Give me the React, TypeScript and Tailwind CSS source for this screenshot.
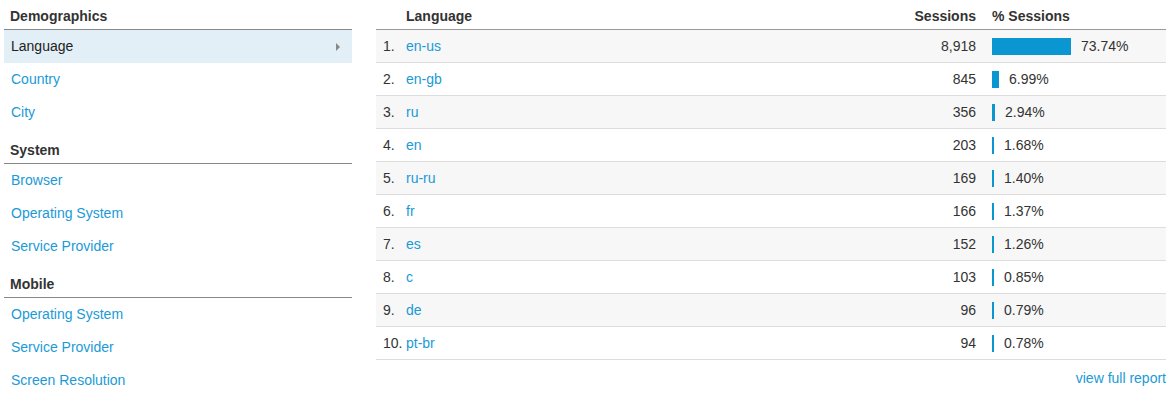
const rows: [string, string, number][] = [
  ["en-us", "8,918", 73.74],
  ["en-gb", "845", 6.99],
  ["ru", "356", 2.94],
  ["en", "203", 1.68],
  ["ru-ru", "169", 1.4],
  ["fr", "166", 1.37],
  ["es", "152", 1.26],
  ["c", "103", 0.85],
  ["de", "96", 0.79],
  ["pt-br", "94", 0.78],
];

function Section({ title, items, active }: { title: string; items: string[]; active?: string }) {
  return (
    <div>
      <div className="h-[30px] flex items-end pb-[2px] pl-[6px] font-bold text-[#333] border-b border-[#888]">{title}</div>
      {items.map((it) => (
        <div
          key={it}
          className={
            "h-[33px] flex items-center pl-[7px] pr-[12px] " +
            (it === active ? "bg-[#e2eff6] text-[#222]" : "text-[#1a9ad6]")
          }
        >
          <span className="flex-1">{it}</span>
          {it === active && <span className="w-0 h-0 border-y-[4px] border-y-transparent border-l-[4px] border-l-[#888]" />}
        </div>
      ))}
      <div className="h-[5px]" />
    </div>
  );
}

export default function App() {
  return (
    <div className="w-[1174px] h-[403px] bg-white flex text-[14px] text-[#333]" style={{ fontFamily: '"Liberation Sans", Arial, sans-serif' }}>
      <div className="w-[348px] ml-[4px] flex flex-col">
        <Section title="Demographics" items={["Language", "Country", "City"]} active="Language" />
        <Section title="System" items={["Browser", "Operating System", "Service Provider"]} />
        <Section title="Mobile" items={["Operating System", "Service Provider", "Screen Resolution"]} />
      </div>
      <div className="w-[790px] ml-[24px] flex flex-col">
        <div className="h-[30px] flex items-end pb-[2px] font-bold border-b border-[#999]">
          <span className="pl-[30px] flex-1">Language</span>
          <span className="w-[100px] text-right">Sessions</span>
          <span className="w-[190px] pl-[16px]">% Sessions</span>
        </div>
        {rows.map(([lang, s, p], i) => (
          <div key={lang} className={"h-[33px] flex items-center border-b border-[#ddd] " + (i % 2 === 0 ? "bg-[#f7f7f7]" : "bg-white")}>
            <span className="w-[30px] pl-[7px]">{i + 1}.</span>
            <span className="flex-1 text-[#1a9ad6]">{lang}</span>
            <span className="w-[100px] text-right">{s}</span>
            <span className="w-[190px] pl-[16px] flex items-center">
              <span className="h-[17px] bg-[#0a96d0]" style={{ width: Math.max(2, Math.round((p / 73.74) * 79)) }} />
              <span className="ml-[10px]">{p.toFixed(2)}%</span>
            </span>
          </div>
        ))}
        <div className="text-right text-[#1a9ad6] pt-[8px] pr-[0px]">view full report</div>
      </div>
    </div>
  );
}
